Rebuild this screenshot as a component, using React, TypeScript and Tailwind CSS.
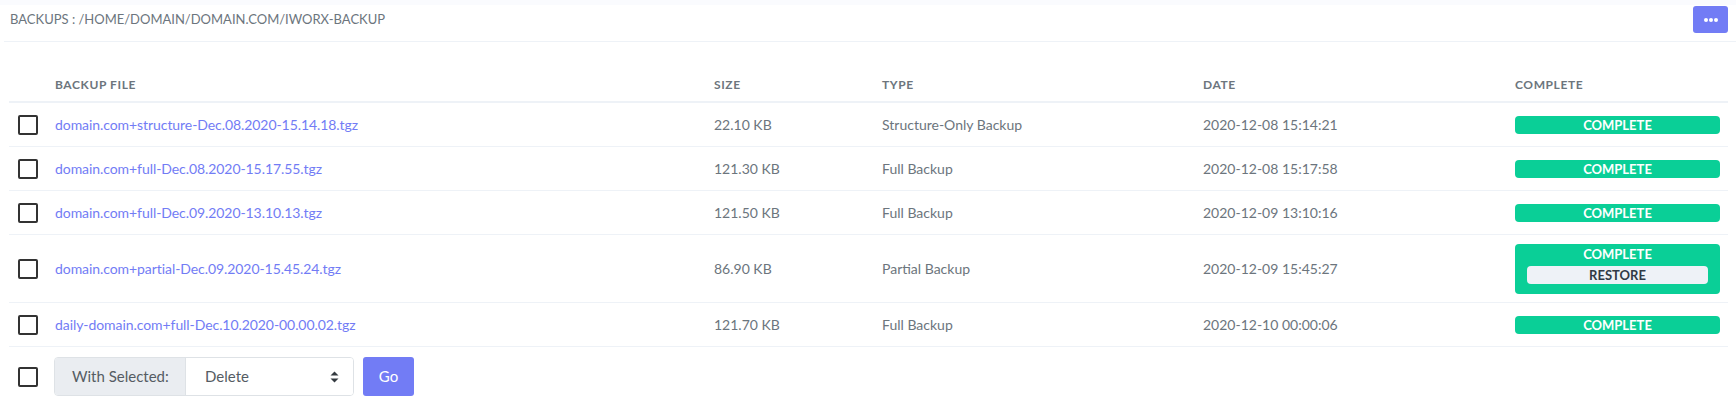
import React from 'react'

type Backup = {
  file: string
  size: string
  type: string
  date: string
  restore?: boolean
}

const backups: Backup[] = [
  { file: 'domain.com+structure-Dec.08.2020-15.14.18.tgz', size: '22.10 KB', type: 'Structure-Only Backup', date: '2020-12-08 15:14:21' },
  { file: 'domain.com+full-Dec.08.2020-15.17.55.tgz', size: '121.30 KB', type: 'Full Backup', date: '2020-12-08 15:17:58' },
  { file: 'domain.com+full-Dec.09.2020-13.10.13.tgz', size: '121.50 KB', type: 'Full Backup', date: '2020-12-09 13:10:16' },
  { file: 'domain.com+partial-Dec.09.2020-15.45.24.tgz', size: '86.90 KB', type: 'Partial Backup', date: '2020-12-09 15:45:27', restore: true },
  { file: 'daily-domain.com+full-Dec.10.2020-00.00.02.tgz', size: '121.70 KB', type: 'Full Backup', date: '2020-12-10 00:00:06' },
]

function Checkbox() {
  return <span className="block w-[20px] h-[20px] border-2 border-[#333] rounded-[2px] bg-white" />
}

function StatusBadge({ restore }: { restore?: boolean }) {
  if (!restore) {
    return (
      <div className="h-[18px] rounded-[4px] bg-[#0acf97] text-white text-[13px] font-bold leading-[18px] text-center">
        COMPLETE
      </div>
    )
  }
  return (
    <div className="rounded-[4px] bg-[#0acf97] px-3 pb-[10px] text-center">
      <div className="text-white text-[13px] font-bold leading-[18px] pt-[1px]">COMPLETE</div>
      <button className="mt-[3px] block w-full h-[18px] rounded-[4px] bg-[#eef2f7] text-[#313a46] text-[13px] font-bold leading-[18px]">
        RESTORE
      </button>
    </div>
  )
}

export default function App() {
  const th = 'pl-[9px] text-left text-[12px] font-bold uppercase tracking-[0.05em] text-[#6c757d] h-[34px] border-b-2 border-[#eef2f7]'
  return (
    <div className="min-h-screen bg-white font-['Lato',sans-serif] text-[14px] text-[#6c757d]">
      <div className="h-[5px] bg-[#fafbfe]" />
      <div className="ml-1 pl-[6px] pr-2 pt-[1px] h-[37px] flex items-start justify-between border-b border-[#eef2f7]">
        <span className="leading-[27px] text-[13px] text-[#6c757d]">BACKUPS : /HOME/DOMAIN/DOMAIN.COM/IWORX-BACKUP</span>
        <button className="w-[35px] h-[27px] rounded-[3px] bg-[#727cf5] flex items-center justify-center gap-[1px]">
          <span className="w-[4px] h-[4px] rounded-full bg-white" />
          <span className="w-[4px] h-[4px] rounded-full bg-white" />
          <span className="w-[4px] h-[4px] rounded-full bg-white" />
        </button>
      </div>

      <div className="mt-[26px] pl-[9px]">
        <table className="table-fixed w-[1719px]">
          <colgroup>
            <col className="w-[37px]" />
            <col className="w-[659px]" />
            <col className="w-[168px]" />
            <col className="w-[321px]" />
            <col className="w-[312px]" />
            <col className="w-[222px]" />
          </colgroup>
          <thead>
            <tr>
              <th className={th}></th>
              <th className={th}>Backup File</th>
              <th className={th}>Size</th>
              <th className={th}>Type</th>
              <th className={th}>Date</th>
              <th className={th}>Complete</th>
            </tr>
          </thead>
          <tbody>
            {backups.map((b) => {
              const td = b.restore
                ? 'pl-[9px] py-[8.5px] leading-[21px] border-b border-[#eef2f7] align-middle'
                : 'pl-[9px] py-[11px] leading-[21px] border-b border-[#eef2f7] align-middle'
              return (
                <tr key={b.file}>
                  <td className={td}>
                    <Checkbox />
                  </td>
                  <td className={td}>
                    <a className="text-[#727cf5] tracking-[-0.005em]">{b.file}</a>
                  </td>
                  <td className={td}>{b.size}</td>
                  <td className={td}>{b.type}</td>
                  <td className={td}>{b.date}</td>
                  <td className={td + ' pr-2'}>
                    <StatusBadge restore={b.restore} />
                  </td>
                </tr>
              )
            })}
          </tbody>
        </table>
      </div>

      <div className="pt-[10px] pl-[18px] flex items-center">
        <Checkbox />
        <div className="ml-[16px] flex h-[39px] border border-[#dee2e6] rounded-[4px] overflow-hidden">
          <div className="w-[131px] bg-[#eaedf1] text-[#555c63] text-[15px] flex items-center pl-[17px] border-r border-[#dee2e6]">
            With Selected:
          </div>
          <div className="w-[167px] bg-white text-[#555c63] text-[15px] flex items-center justify-between pl-[19px] pr-[14px]">
            <span>Delete</span>
            <svg width="9" height="12" viewBox="0 0 9 12">
              <path d="M4.5 0.5 L8.5 4.5 H0.5 Z" fill="#343a40" />
              <path d="M4.5 11.5 L8.5 7.5 H0.5 Z" fill="#343a40" />
            </svg>
          </div>
        </div>
        <button className="ml-[9px] w-[51px] h-[39px] rounded-[3px] bg-[#727cf5] text-white text-[15px]">Go</button>
      </div>
    </div>
  )
}
